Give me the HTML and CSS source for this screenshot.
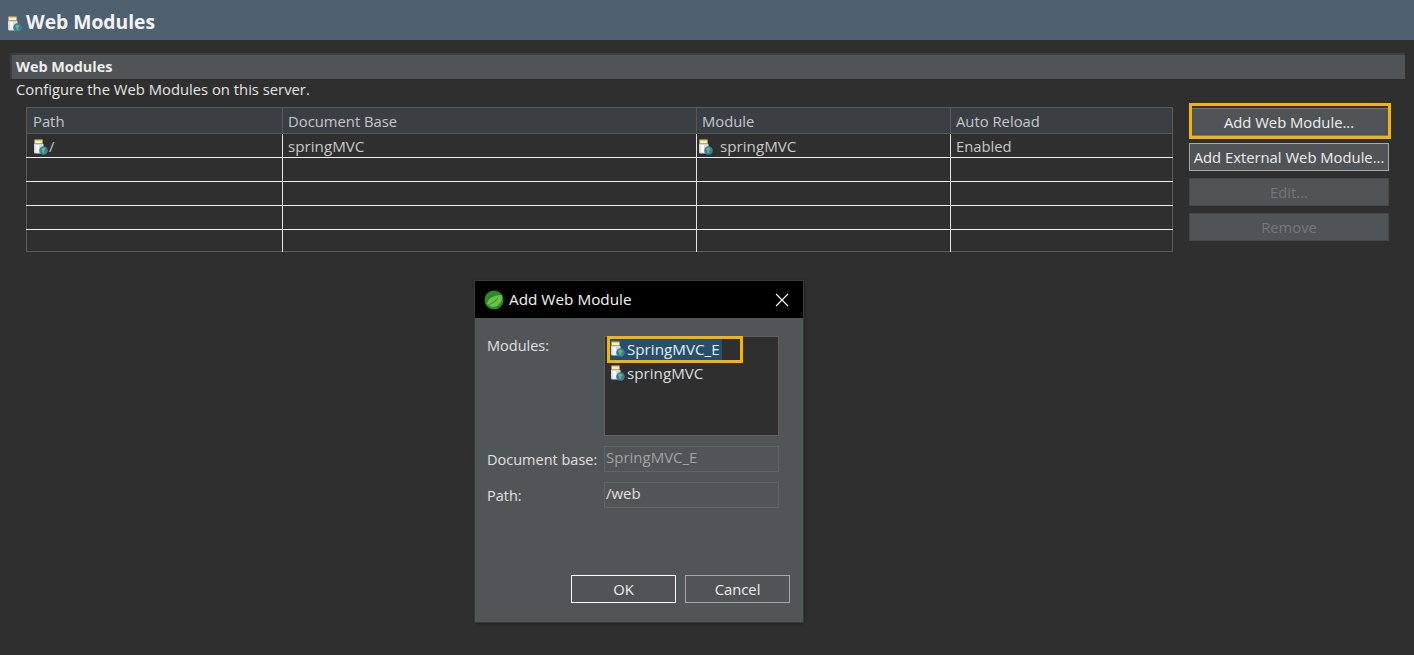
FILE: index.html
```html
<!DOCTYPE html>
<html lang="en">
<head>
    <meta charset="UTF-8">
    <meta name="viewport" content="width=device-width, initial-scale=1.0">
    <title>Web Modules</title>
    <link rel="stylesheet" href="styles.css">
</head>
<body>
    <svg class="defs" width="0" height="0">
        <symbol id="module-icon" viewBox="0 0 15 16">
            <path d="M1 5h9.500v9.500H2.500A1.500 1.500 0 0 1 1 13z" fill="#d5dce4"/>
            <path d="M2.500 6h3.500v7.500H3.500z" fill="#fbfcfd"/>
            <path d="M1.500 .8h8v4H1.500z" fill="#f8efc8"/>
            <path d="M1.500 1h8M1.500 4.600h8" stroke="#c4a548" stroke-width="1" fill="none"/>
            <circle cx="10.500" cy="11.500" r="4.300" fill="#3a7fa6"/>
            <path d="M8 9.800l2.600-1.400 2 1.300-1.500 2.300.4 2.400-1.800-.7-.5-2.300z" fill="#6dbb4a"/>
        </symbol>
    </svg>

    <header class="page-header">
        <svg class="icon"><use href="#module-icon"/></svg>
        <h1>Web Modules</h1>
    </header>

    <main class="page-body">
        <h2 class="section-title">Web Modules</h2>
        <p class="section-desc">Configure the Web Modules on this server.</p>

        <div class="section-content">
            <table class="modules-table">
                <colgroup>
                    <col class="col-path">
                    <col class="col-base">
                    <col class="col-module">
                    <col class="col-reload">
                </colgroup>
                <thead>
                    <tr>
                        <th>Path</th>
                        <th>Document Base</th>
                        <th>Module</th>
                        <th>Auto Reload</th>
                    </tr>
                </thead>
                <tbody>
                    <tr>
                        <td><svg class="icon icon-path"><use href="#module-icon"/></svg>/</td>
                        <td class="wide-text">springMVC</td>
                        <td class="wide-text"><svg class="icon icon-module"><use href="#module-icon"/></svg>springMVC</td>
                        <td>Enabled</td>
                    </tr>
                    <tr><td></td><td></td><td></td><td></td></tr>
                    <tr><td></td><td></td><td></td><td></td></tr>
                    <tr><td></td><td></td><td></td><td></td></tr>
                    <tr><td></td><td></td><td></td><td></td></tr>
                </tbody>
            </table>

            <div class="side-buttons">
                <button class="btn btn-marked">Add Web Module...</button>
                <button class="btn">Add External Web Module...</button>
                <button class="btn" disabled>Edit...</button>
                <button class="btn" disabled>Remove</button>
            </div>
        </div>
    </main>

    <!-- Add Web Module dialog -->
    <div class="dialog">
        <div class="dialog-title">
            <svg class="spring-logo" viewBox="0 0 20 20">
                <circle cx="10" cy="10" r="9.500" fill="#2a8a2a"/>
                <path d="M3 14c1-6 7-9 15-9 1 6-3 12-9 12-2 0-4-1-6-3z" fill="#6cc04a"/>
                <path d="M4 15c3-1 7-3 10-7" stroke="#3a9a34" stroke-width="1.200" fill="none"/>
            </svg>
            <span class="dialog-name">Add Web Module</span>
            <svg class="dialog-close" viewBox="0 0 14 14">
                <path d="M1 1l12 12M13 1L1 13" stroke="#fff" stroke-width="1.100" fill="none"/>
            </svg>
        </div>
        <div class="dialog-body">
            <div class="form-grid">
                <label class="label-top">Modules:</label>
                <div class="module-list">
                    <div class="module-item selected"><svg class="icon"><use href="#module-icon"/></svg>SpringMVC_E</div>
                    <div class="module-item"><svg class="icon"><use href="#module-icon"/></svg>springMVC</div>
                    <div class="list-mark"></div>
                </div>
                <label>Document base:</label>
                <div class="field field-disabled">SpringMVC_E</div>
                <label>Path:</label>
                <div class="field">/web</div>
            </div>
            <div class="dialog-buttons">
                <button class="btn btn-default">OK</button>
                <button class="btn">Cancel</button>
            </div>
        </div>
    </div>
</body>
</html>
```

FILE: styles.css
```css
* {
    box-sizing: border-box;
}
body {
    font-family: "Open Sans", "Noto Sans", sans-serif;
    font-size: 14.8px;
    margin: 0;
    height: 655px;
    overflow: hidden;
    background-color: #2f2f2f;
    color: #e0e0e0;
    position: relative;
}
.defs {
    position: absolute;
}
.icon {
    width: 15px;
    height: 16px;
    vertical-align: -3px;
    flex-shrink: 0;
}

/* Header */
.page-header {
    height: 40px;
    background-color: #4f6070;
    display: flex;
    align-items: center;
    padding: 3px 0 0 7px;
    gap: 4px;
}
.page-header .icon {
    margin-top: 5px;
}
.page-header h1 {
    margin: 0;
    font-size: 19.3px;
    font-weight: 700;
    color: #f2f5f8;
}

/* Section */
.page-body {
    padding: 13px 9px 0 10px;
}
.section-title {
    margin: 0;
    height: 26px;
    line-height: 24px;
    padding-left: 4px;
    font-size: 14.4px;
    font-weight: 700;
    color: #eeeeee;
    background-color: #505456;
    border-top: 2px solid #3c3f41;
    border-left: 2px solid #3c3f41;
}
.section-desc {
    margin: 0;
    height: 28px;
    line-height: 21px;
    padding-left: 6px;
    color: #e4e4e4;
}
.section-content {
    display: flex;
    align-items: flex-start;
    padding-left: 16px;
    gap: 16px;
}

/* Table */
.modules-table {
    width: 1147px;
    table-layout: fixed;
    border-collapse: collapse;
    border: 1px solid #5a5d5f;
}
.col-path { width: 256px; }
.col-base { width: 414px; }
.col-module { width: 254px; }
.modules-table th {
    height: 26px;
    padding: 0 5px;
    font-weight: 400;
    text-align: left;
    color: #c4c8cb;
    background-color: #3a3f43;
    border-right: 1px solid #55595c;
    border-bottom: 1px solid #55595c;
}
.modules-table td {
    height: 24px;
    padding: 0 5px;
    color: #c8c8c8;
    border-right: 1px solid #e4e4e4;
    border-bottom: 1px solid #f0f0f0;
}
.modules-table th:first-child,
.modules-table td:first-child {
    padding-left: 6px;
}
.modules-table tr:last-child td {
    height: 22px;
    border-bottom: none;
}
.modules-table th:last-child,
.modules-table td:last-child {
    border-right: none;
}
.wide-text {
    font-size: 15.2px;
}
.icon-path {
    margin-right: 1px;
}
.icon-module {
    margin-left: -4px;
    margin-right: 7px;
}

/* Buttons */
.btn {
    font: inherit;
    height: 28px;
    padding: 0;
    color: #eeeeee;
    background-color: #505456;
    border: 1px solid #a8a8a8;
}
.btn:disabled {
    color: #73777a;
    border-color: #44484a;
}
.side-buttons {
    width: 200px;
    margin-top: 1px;
    display: flex;
    flex-direction: column;
    gap: 7px;
}
.btn-marked {
    position: relative;
    border-color: #777777;
}
.btn-marked::after {
    content: "";
    position: absolute;
    left: -1px;
    right: -3px;
    top: -6px;
    bottom: -4px;
    border: 3px solid #f5b400;
}
.btn-default {
    border-color: #ffffff;
}

/* Dialog */
.dialog {
    position: absolute;
    left: 475px;
    top: 281px;
    width: 328px;
    height: 341px;
    background-color: #505557;
    box-shadow: 0 0 0 1px #3a3a3a, 1px 1px 3px rgba(0, 0, 0, 0.5);
}
.dialog-title {
    height: 37px;
    background-color: #000000;
    color: #f2f2f2;
    display: flex;
    align-items: center;
    padding: 0 14px 0 9px;
}
.spring-logo {
    width: 20px;
    height: 20px;
    margin-right: 5px;
}
.dialog-name {
    flex: 1;
    font-size: 15.3px;
    padding-bottom: 2px;
}
.dialog-close {
    width: 14px;
    height: 14px;
}
.dialog-body {
    padding: 18px 13px 0 12px;
}
.form-grid {
    display: grid;
    grid-template-columns: 117px 175px;
    row-gap: 10px;
    align-items: center;
}
.form-grid label {
    color: #e0e0e0;
    font-size: 14.5px;
}
.form-grid .label-top {
    align-self: start;
    line-height: 20px;
}
.module-list {
    position: relative;
    height: 100px;
    padding: 0 5px;
    background-color: #2f2f2f;
    border: 1px solid #5e6264;
}
.module-item {
    height: 24px;
    line-height: 24px;
    font-size: 15.2px;
    color: #d8dcdf;
    display: flex;
    align-items: center;
    gap: 2px;
}
.module-item.selected {
    width: 112px;
    color: #e8eef2;
    background-color: #264f6e;
}
.list-mark {
    position: absolute;
    left: 2px;
    top: -1px;
    width: 136px;
    height: 27px;
    border: 3px solid #f5b400;
}
.field {
    height: 26px;
    line-height: 20px;
    padding-left: 1px;
    font-size: 15px;
    color: #e0e0e0;
    border: 1px solid #606466;
}
.field-disabled {
    color: #a0a2a4;
}
.dialog-buttons {
    display: flex;
    justify-content: flex-end;
    gap: 9px;
    margin: 67px 0 0;
}
.dialog-buttons .btn {
    width: 105px;
}
```
